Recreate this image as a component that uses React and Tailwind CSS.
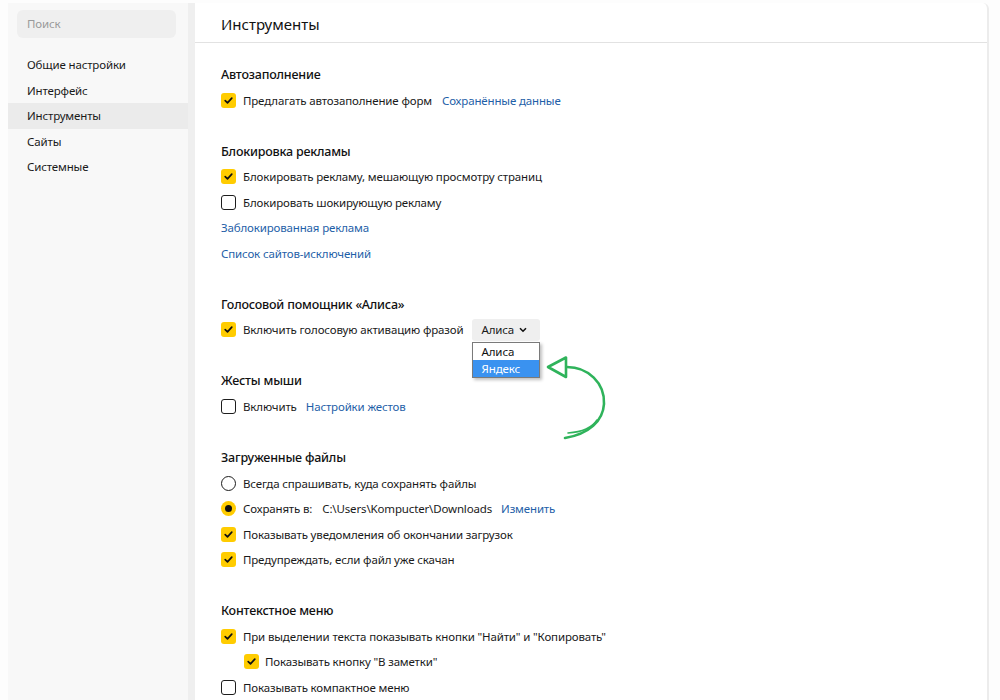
import React from "react";

const font = { fontFamily: '"Noto Sans", "Open Sans", Arial, sans-serif' };

function Check({ checked }) {
  if (checked) {
    return (
      <span className="w-[15px] h-[15px] rounded-[3px] bg-[#ffcc00] flex items-center justify-center shrink-0">
        <svg width="11" height="11" viewBox="0 0 11 11">
          <path d="M2.2 5.6 L4.5 7.8 L8.8 3.2" fill="none" stroke="#111" strokeWidth="1.7" strokeLinecap="round" strokeLinejoin="round" />
        </svg>
      </span>
    );
  }
  return <span className="w-[15px] h-[15px] rounded-[3px] border-[1.5px] border-[#1d1d1d] bg-white shrink-0" />;
}

function Radio({ checked }) {
  if (checked) {
    return (
      <span className="w-[15px] h-[15px] rounded-full bg-[#ffcc00] flex items-center justify-center shrink-0">
        <span className="w-[7px] h-[7px] rounded-full bg-[#111]" />
      </span>
    );
  }
  return <span className="w-[15px] h-[15px] rounded-full border-[1.5px] border-[#1d1d1d] bg-white shrink-0" />;
}

function Row({ children, indent }) {
  return (
    <div
      className={
        "h-[25.5px] flex items-center text-[11.5px] tracking-[-0.15px] text-[#1a1a1a] " +
        (indent ? "pl-[23px]" : "")
      }
    >
      {children}
    </div>
  );
}

function Link({ children, className = "" }) {
  return <span className={"text-[#1f5fa8] " + className}>{children}</span>;
}

function Heading({ children }) {
  return (
    <div className="h-[28px] pt-[4px] flex items-center text-[12.5px] tracking-[-0.2px] font-medium text-[#111]">
      {children}
    </div>
  );
}

function Section({ title, children, first }) {
  return (
    <div className={first ? "" : "mt-[23.1px]"}>
      <Heading>{title}</Heading>
      {children}
    </div>
  );
}

export default function App() {
  const nav = ["Общие настройки", "Интерфейс", "Инструменты", "Сайты", "Системные"];
  return (
    <div className="w-[1000px] h-[700px] bg-[#fdfdfd] flex pl-2 pt-[3px] overflow-hidden relative" style={font}>
      <aside className="w-[180px] bg-[#f8f8f8] flex flex-col shrink-0">
        <div className="mt-[7px] ml-[9px] w-[159px] h-[28px] rounded-md bg-[#efefef] flex items-center pl-[10px] text-[11.5px] tracking-[-0.15px] text-[#9a9a9a]">
          Поиск
        </div>
        <nav className="mt-[14px] flex flex-col">
          {nav.map((n) => (
            <div
              key={n}
              className={
                "h-[25.5px] flex items-center pl-[19px] text-[11.5px] tracking-[-0.15px] text-[#1a1a1a] " +
                (n === "Инструменты" ? "bg-[#ebebeb]" : "")
              }
            >
              {n}
            </div>
          ))}
        </nav>
      </aside>
      <div className="w-[7px] bg-[#efefef] shrink-0" />
      <main className="w-[794px] bg-white border-r-2 border-[#ececec] rounded-tr-md shrink-0 flex flex-col">
        <header className="h-[42px] flex items-center pl-[26px] pt-[4px] text-[15px] text-[#111] border-b-[1.5px] border-[#e2e2e2]">
          Инструменты
        </header>
        <div className="pl-[26px] pt-[17px] flex flex-col">
          <Section title="Автозаполнение" first>
            <Row>
              <Check checked />
              <span className="ml-[7px]">Предлагать автозаполнение форм</span>
              <Link className="ml-[10px]">Сохранённые данные</Link>
            </Row>
          </Section>
          <Section title="Блокировка рекламы">
            <Row>
              <Check checked />
              <span className="ml-[7px]">Блокировать рекламу, мешающую просмотру страниц</span>
            </Row>
            <Row>
              <Check />
              <span className="ml-[7px]">Блокировать шокирующую рекламу</span>
            </Row>
            <Row>
              <Link>Заблокированная реклама</Link>
            </Row>
            <Row>
              <Link>Список сайтов-исключений</Link>
            </Row>
          </Section>
          <Section title="Голосовой помощник «Алиса»">
            <Row>
              <Check checked />
              <span className="ml-[7px]">Включить голосовую активацию фразой</span>
              <div className="relative ml-[9px]">
                <div className="w-[68px] h-[22px] rounded-[3px] bg-[#efefef] flex items-center pl-[9px] text-[11.5px] text-[#1a1a1a]">
                  <span className="w-[38px]">Алиса</span>
                  <svg width="8" height="6" viewBox="0 0 8 6">
                    <path d="M1 1.2 L4 4.2 L7 1.2" fill="none" stroke="#111" strokeWidth="1.6" />
                  </svg>
                </div>
                <div className="absolute left-0 top-[23px] w-[68px] bg-white border border-[#7a7a7a] shadow-[2px_2px_3px_rgba(0,0,0,0.25)] flex flex-col text-[11.5px] tracking-[-0.1px]">
                  <div className="h-[17px] flex items-center pl-[8px] text-[#111]">Алиса</div>
                  <div className="h-[17px] flex items-center pl-[8px] text-white bg-[#3a92f0]">Яндекс</div>
                </div>
              </div>
            </Row>
          </Section>
          <Section title="Жесты мыши">
            <Row>
              <Check />
              <span className="ml-[7px]">Включить</span>
              <Link className="ml-[9px]">Настройки жестов</Link>
            </Row>
          </Section>
          <Section title="Загруженные файлы">
            <Row>
              <Radio />
              <span className="ml-[7px]">Всегда спрашивать, куда сохранять файлы</span>
            </Row>
            <Row>
              <Radio checked />
              <span className="ml-[7px]">Сохранять в:</span>
              <span className="ml-[10px]">C:\Users\Kompucter\Downloads</span>
              <Link className="ml-[9px]">Изменить</Link>
            </Row>
            <Row>
              <Check checked />
              <span className="ml-[7px]">Показывать уведомления об окончании загрузок</span>
            </Row>
            <Row>
              <Check checked />
              <span className="ml-[7px]">Предупреждать, если файл уже скачан</span>
            </Row>
          </Section>
          <Section title="Контекстное меню">
            <Row>
              <Check checked />
              <span className="ml-[7px]">При выделении текста показывать кнопки "Найти" и "Копировать"</span>
            </Row>
            <Row indent>
              <Check checked />
              <span className="ml-[6px]">Показывать кнопку "В заметки"</span>
            </Row>
            <Row>
              <Check />
              <span className="ml-[7px]">Показывать компактное меню</span>
            </Row>
          </Section>
        </div>
      </main>
      <svg className="absolute left-[540px] top-[350px] pointer-events-none" width="80" height="100" viewBox="540 350 80 100">
        <path d="M548 367 L566 357.5 L566 377 Z" fill="none" stroke="#2fb35b" strokeWidth="2.6" strokeLinejoin="round" />
        <path d="M567 367 C 588 367, 605 383, 604 404 C 603 421, 589 434, 565 438" fill="none" stroke="#2fb35b" strokeWidth="2.6" strokeLinecap="round" />
        <path d="M597 420 C 592 428, 582 432, 568 433" fill="none" stroke="#2fb35b" strokeWidth="1.6" strokeLinecap="round" />
      </svg>
    </div>
  );
}
